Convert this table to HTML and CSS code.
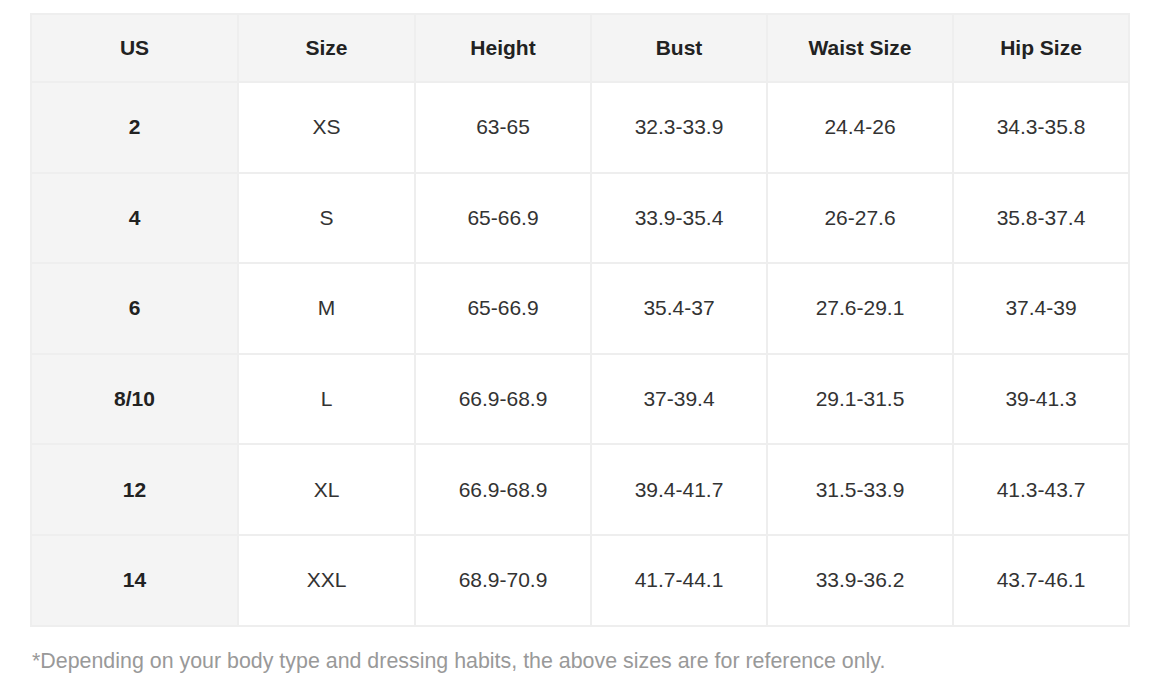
FILE: index.html
```html
<!DOCTYPE html>
<html>
<head>
<meta charset="utf-8">
<link rel="stylesheet" href="styles.css">
</head>
<body>
<div class="wrap">
  <table class="size-table">
    <colgroup>
      <col class="c1"><col class="c2"><col class="c3"><col class="c4"><col class="c5"><col class="c6">
    </colgroup>
    <thead>
      <tr><th>US</th><th>Size</th><th>Height</th><th>Bust</th><th>Waist Size</th><th>Hip Size</th></tr>
    </thead>
    <tbody>
      <tr><td class="us">2</td><td>XS</td><td>63-65</td><td>32.3-33.9</td><td>24.4-26</td><td>34.3-35.8</td></tr>
      <tr><td class="us">4</td><td>S</td><td>65-66.9</td><td>33.9-35.4</td><td>26-27.6</td><td>35.8-37.4</td></tr>
      <tr><td class="us">6</td><td>M</td><td>65-66.9</td><td>35.4-37</td><td>27.6-29.1</td><td>37.4-39</td></tr>
      <tr><td class="us">8/10</td><td>L</td><td>66.9-68.9</td><td>37-39.4</td><td>29.1-31.5</td><td>39-41.3</td></tr>
      <tr><td class="us">12</td><td>XL</td><td>66.9-68.9</td><td>39.4-41.7</td><td>31.5-33.9</td><td>41.3-43.7</td></tr>
      <tr><td class="us">14</td><td>XXL</td><td>68.9-70.9</td><td>41.7-44.1</td><td>33.9-36.2</td><td>43.7-46.1</td></tr>
    </tbody>
  </table>
  <p class="note">*Depending on your body type and dressing habits, the above sizes are for reference only.</p>
</div>
</body>
</html>
```
FILE: styles.css
```css
html, body {
  margin: 0;
  padding: 0;
  background: #ffffff;
}
.wrap {
  padding: 13px 0 0 30px;
  font-family: "Liberation Sans", Arial, sans-serif;
}
.size-table {
  border-collapse: collapse;
  table-layout: fixed;
  width: 1098px;
}
.c1 { width: 207px; }
.c2 { width: 177px; }
.c3 { width: 176px; }
.c4 { width: 176px; }
.c5 { width: 186px; }
.c6 { width: 176px; }
.size-table th,
.size-table td {
  border: 2px solid #eeeeee;
  text-align: center;
  vertical-align: middle;
  padding: 0;
  font-size: 21px;
}
.size-table th {
  height: 66px;
  background: #f4f4f4;
  color: #222222;
  font-weight: bold;
}
.size-table td {
  height: 88.6px;
  color: #333333;
}
.size-table td.us {
  background: #f4f4f4;
  font-weight: bold;
  color: #222222;
}
.note {
  margin: 22px 0 0 2px;
  font-size: 21.4px;
  color: #999999;
}
```
